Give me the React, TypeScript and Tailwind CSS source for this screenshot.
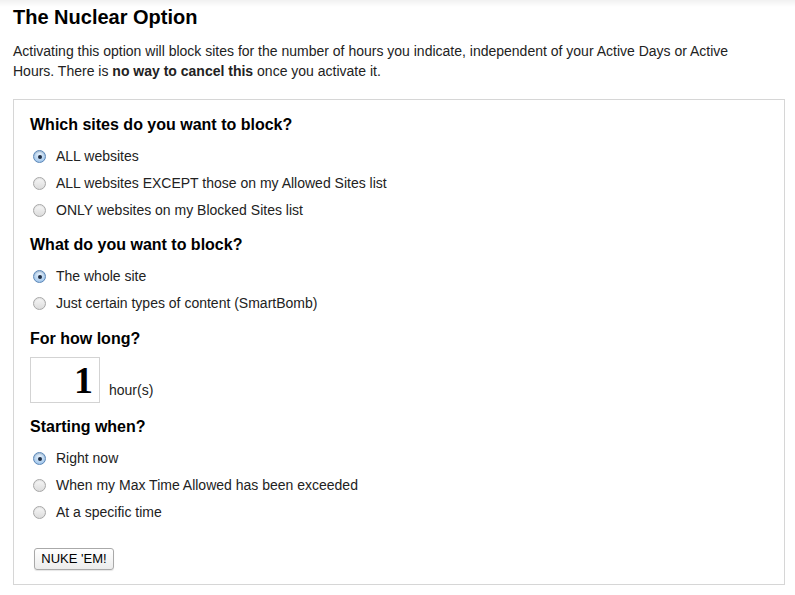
import React from "react";

type Opt = { label: string; checked?: boolean };

function Radio({ checked }: { checked?: boolean }) {
  if (checked) {
    return (
      <span className="ml-[3px] flex h-[13px] w-[13px] shrink-0 items-center justify-center rounded-full border border-[#5b87b8] bg-[radial-gradient(circle_at_50%_35%,#e6f1fb,#a9cbed_70%,#86b3e0)] shadow-[inset_0_1px_1px_rgba(0,0,0,0.15)]">
        <span className="h-[4px] w-[4px] rounded-full bg-[#1f2e44]" />
      </span>
    );
  }
  return (
    <span className="ml-[3px] h-[13px] w-[13px] shrink-0 rounded-full border border-[#a7a7a7] bg-[linear-gradient(#f7f7f7,#dcdcdc)] shadow-[inset_0_1px_1px_rgba(0,0,0,0.08)]" />
  );
}

function Group({ title, options, className }: { title: string; options: Opt[]; className?: string }) {
  return (
    <div className={className}>
      <h2 className="text-[16px] font-bold leading-[20px] text-black">{title}</h2>
      <div className="mt-[8px]">
        {options.map((o) => (
          <label key={o.label} className="flex h-[27px] items-center gap-[10px] text-[14px] text-[#222]">
            <Radio checked={o.checked} />
            <span>{o.label}</span>
          </label>
        ))}
      </div>
    </div>
  );
}

export default function App() {
  return (
    <div className="min-h-[595px] bg-[linear-gradient(#f1f1f1,#ffffff_7px)] px-[13px] pt-[6px] font-['Liberation_Sans',Arial,sans-serif] text-[#222]">
      <h1 className="text-[20px] font-bold leading-[22px] text-black">The Nuclear Option</h1>
      <p className="mt-[13px] w-[760px] text-[14px] leading-[20px]">
        Activating this option will block sites for the number of hours you indicate, independent of your Active Days or Active
        Hours. There is <b>no way to cancel this</b> once you activate it.
      </p>

      <div className="mt-[18px] w-[772px] border border-[#d6d6d6] bg-white pb-[14px] pl-[16px] pt-[15px]">
        <Group
          title="Which sites do you want to block?"
          options={[
            { label: "ALL websites", checked: true },
            { label: "ALL websites EXCEPT those on my Allowed Sites list" },
            { label: "ONLY websites on my Blocked Sites list" },
          ]}
        />
        <Group
          className="mt-[11px]"
          title="What do you want to block?"
          options={[
            { label: "The whole site", checked: true },
            { label: "Just certain types of content (SmartBomb)" },
          ]}
        />

        <div className="mt-[12px]">
          <h2 className="text-[16px] font-bold leading-[20px] text-black">For how long?</h2>
          <div className="mt-[8px] flex items-end gap-[9px]">
            <div className="flex h-[46px] w-[70px] items-center justify-end border border-[#d3d3d3] pr-[6px] font-['Liberation_Serif','Times_New_Roman',serif] text-[38px] font-bold leading-none text-black">
              1
            </div>
            <span className="mb-[5px] text-[14px] leading-[16px]">hour(s)</span>
          </div>
        </div>

        <Group
          className="mt-[14px]"
          title="Starting when?"
          options={[
            { label: "Right now", checked: true },
            { label: "When my Max Time Allowed has been exceeded" },
            { label: "At a specific time" },
          ]}
        />

        <button className="ml-[4px] mt-[22px] flex h-[22px] w-[80px] items-center justify-center rounded-[3px] border border-[#a9a9a9] bg-[linear-gradient(#ffffff,#ececec)] text-[13px] text-black shadow-[0_1px_1px_rgba(0,0,0,0.1)]">
          NUKE 'EM!
        </button>
      </div>
    </div>
  );
}
